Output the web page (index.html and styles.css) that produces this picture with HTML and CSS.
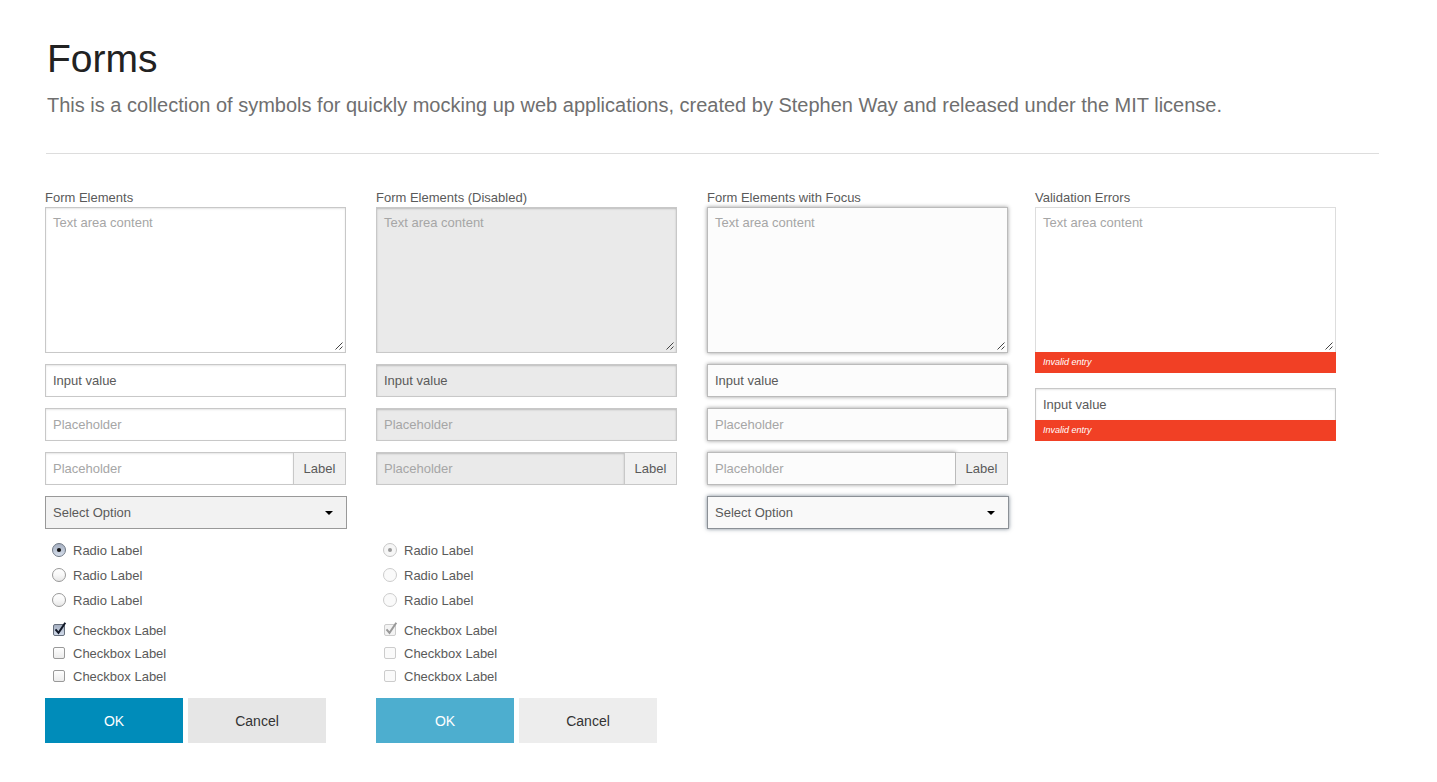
FILE: index.html
```html
<!DOCTYPE html>
<html lang="en">
<head>
<meta charset="utf-8">
<meta name="viewport" content="width=device-width, initial-scale=1">
<title>Forms</title>
<link rel="stylesheet" href="styles.css">
</head>
<body>
<header class="page-header">
  <h1 class="title">Forms</h1>
  <p class="intro">This is a collection of symbols for quickly mocking up web applications, created by Stephen Way and released under the MIT license.</p>
</header>
<main class="columns">
  <form class="column">
    <label class="heading" for="area-1">Form Elements</label>
    <div class="fields">
      <textarea class="field area" id="area-1" placeholder="Text area content"></textarea>
      <input class="field" type="text" value="Input value" aria-label="Value">
      <input class="field" type="text" placeholder="Placeholder" aria-label="Text">
      <div class="group">
        <input class="field" type="text" id="group-1" placeholder="Placeholder">
        <label class="addon" for="group-1">Label</label>
      </div>
      <select class="field select" aria-label="Option"><option>Select Option</option></select>
    </div>
    <div class="radios">
      <label class="choice"><input class="radio" type="radio" name="r1" checked>Radio Label</label>
      <label class="choice"><input class="radio" type="radio" name="r1">Radio Label</label>
      <label class="choice"><input class="radio" type="radio" name="r1">Radio Label</label>
    </div>
    <div class="checks">
      <label class="choice"><input class="check" type="checkbox" checked>Checkbox Label</label>
      <label class="choice"><input class="check" type="checkbox">Checkbox Label</label>
      <label class="choice"><input class="check" type="checkbox">Checkbox Label</label>
    </div>
    <div class="actions">
      <button class="button primary" type="button">OK</button>
      <button class="button" type="button">Cancel</button>
    </div>
  </form>

  <form class="column">
    <label class="heading" for="area-2">Form Elements (Disabled)</label>
    <div class="fields no-select">
      <textarea class="field area" id="area-2" placeholder="Text area content" disabled></textarea>
      <input class="field" type="text" value="Input value" aria-label="Value" disabled>
      <input class="field" type="text" placeholder="Placeholder" aria-label="Text" disabled>
      <div class="group">
        <input class="field" type="text" id="group-2" placeholder="Placeholder" disabled>
        <label class="addon" for="group-2">Label</label>
      </div>
    </div>
    <div class="radios">
      <label class="choice"><input class="radio" type="radio" name="r2" checked disabled>Radio Label</label>
      <label class="choice"><input class="radio" type="radio" name="r2" disabled>Radio Label</label>
      <label class="choice"><input class="radio" type="radio" name="r2" disabled>Radio Label</label>
    </div>
    <div class="checks">
      <label class="choice"><input class="check" type="checkbox" checked disabled>Checkbox Label</label>
      <label class="choice"><input class="check" type="checkbox" disabled>Checkbox Label</label>
      <label class="choice"><input class="check" type="checkbox" disabled>Checkbox Label</label>
    </div>
    <div class="actions">
      <button class="button primary" type="button" disabled>OK</button>
      <button class="button" type="button" disabled>Cancel</button>
    </div>
  </form>

  <form class="column focused">
    <label class="heading" for="area-3">Form Elements with Focus</label>
    <div class="fields">
      <textarea class="field area" id="area-3" placeholder="Text area content"></textarea>
      <input class="field" type="text" value="Input value" aria-label="Value">
      <input class="field" type="text" placeholder="Placeholder" aria-label="Text">
      <div class="group">
        <input class="field" type="text" id="group-3" placeholder="Placeholder">
        <label class="addon" for="group-3">Label</label>
      </div>
      <select class="field select" aria-label="Option"><option>Select Option</option></select>
    </div>
  </form>

  <form class="column invalid">
    <label class="heading" for="area-4">Validation Errors</label>
    <textarea class="field area" id="area-4" placeholder="Text area content" aria-describedby="error-1"></textarea>
    <p class="error" id="error-1">Invalid entry</p>
    <input class="field" type="text" value="Input value" aria-label="Value" aria-describedby="error-2">
    <p class="error" id="error-2">Invalid entry</p>
  </form>
</main>
</body>
</html>
```
FILE: styles.css
```css
* { box-sizing: border-box; }

body {
  margin: 0;
  background: #fff;
  color: #5a5a5a;
  font: 13px/18px "Liberation Sans", Arial, sans-serif;
}

button, input, textarea, select { font: inherit; color: inherit; }

.page-header {
  margin: 0 58px 0 46px;
  padding: 35px 0 35px 1px;
  border-bottom: 1px solid #ddd;
}

.title {
  margin: 0;
  color: #222;
  font-size: 39px;
  font-weight: 400;
  line-height: 48px;
}

.intro {
  margin: 9px 0 0;
  color: #6f6f6f;
  font-size: 20px;
  line-height: 26px;
}

.columns {
  display: grid;
  grid-template-columns: 331fr 331fr 328fr 301fr;
  align-items: start;
  padding: 35px 101px 39px 45px;
}

.column { padding-right: 30px; min-width: 0; }
.focused { padding-right: 27px; }
.invalid { padding-right: 0; }

.heading { display: block; }

.fields {
  display: flex;
  flex-direction: column;
  gap: 11px;
}
.no-select { padding-bottom: 44px; }

.field {
  display: block;
  width: 100%;
  height: 33px;
  margin: 0;
  padding: 0 7px;
  border: 1px solid #c8c8c8;
  border-radius: 0;
  outline: 0;
  background: #fff;
  box-shadow: inset 0 1px 2px rgba(0, 0, 0, .1);
}
.field::placeholder { color: #a6a6a6; opacity: 1; }

.area {
  height: 146px;
  padding: 6px 7px;
  resize: vertical;
}
.area::-webkit-resizer {
  background: url("data:image/svg+xml,%3Csvg xmlns='http://www.w3.org/2000/svg' width='15' height='15'%3E%3Cpath d='M5.5 12.5l7-7M9.5 12.5l3-3' stroke='%23444' fill='none'/%3E%3C/svg%3E") no-repeat right bottom;
}

.field:disabled {
  background: #eaeaea;
  color: #5a5a5a;
  box-shadow: inset 0 1px 2px rgba(0, 0, 0, .2);
}

.group { display: flex; }
.group .field { flex: 1; min-width: 0; }
.addon {
  flex: none;
  width: 52px;
  height: 33px;
  border: 1px solid #c8c8c8;
  border-left: 0;
  background: #f1f1f1;
  line-height: 31px;
  text-align: center;
}

.select {
  width: calc(100% + 1px);
  appearance: none;
  border-color: #999;
  background: #f2f2f2 url("data:image/svg+xml,%3Csvg xmlns='http://www.w3.org/2000/svg' width='8' height='4'%3E%3Cpath d='M0 0h8L4 4z'/%3E%3C/svg%3E") no-repeat right 13px center;
  box-shadow: none;
}

.focused .field {
  background-color: #fcfcfc;
  border-color: #bbb;
  box-shadow: 0 0 4px rgba(0, 0, 0, .4);
}
.focused .select {
  border-color: #8b9096;
  background-color: #f9f9f9;
  box-shadow: 0 0 4px rgba(40, 60, 80, .6);
}

.invalid .field { border-bottom: 0; height: 32px; }
.invalid .area { height: 145px; border-color: #ddd; box-shadow: none; }
.error {
  margin: 0 0 15px;
  padding: 0 8px;
  background: #f14025;
  color: #fff;
  font-size: 9px;
  font-style: italic;
  line-height: 21px;
}

.radios { margin-top: 9px; }
.checks { margin: 6px 0 10px; }
.choice {
  display: flex;
  align-items: center;
  gap: 6px;
  height: 25px;
  padding-left: 6px;
}
.checks .choice { height: 23px; }

.radio, .check {
  appearance: none;
  flex: none;
  width: 16px;
  height: 17px;
  margin: 0;
}
.radio { background: url("data:image/svg+xml,%3Csvg xmlns='http://www.w3.org/2000/svg' width='16' height='16'%3E%3Cdefs%3E%3ClinearGradient id='g' x2='0' y2='1'%3E%3Cstop stop-color='%23fff'/%3E%3Cstop offset='.5' stop-color='%23f8f8f8'/%3E%3Cstop offset='1' stop-color='%23e5e5e5'/%3E%3C/linearGradient%3E%3C/defs%3E%3Ccircle cx='8' cy='8' r='6.5' fill='url(%23g)' stroke='%23999'/%3E%3C/svg%3E") no-repeat; }
.radio:checked { background-image: url("data:image/svg+xml,%3Csvg xmlns='http://www.w3.org/2000/svg' width='16' height='16'%3E%3Cdefs%3E%3ClinearGradient id='g' x2='0' y2='1'%3E%3Cstop stop-color='%23a3adbf'/%3E%3Cstop offset='1' stop-color='%23d8e0ed'/%3E%3C/linearGradient%3E%3C/defs%3E%3Ccircle cx='8' cy='8' r='6.5' fill='url(%23g)' stroke='%23707985'/%3E%3Ccircle cx='8' cy='8' r='2.1' fill='%23111'/%3E%3C/svg%3E"); }
.radio:disabled { background-image: url("data:image/svg+xml,%3Csvg xmlns='http://www.w3.org/2000/svg' width='16' height='16'%3E%3Ccircle cx='8' cy='8' r='6.5' fill='%23fafafa' stroke='%23ccc'/%3E%3C/svg%3E"); }
.radio:checked:disabled { background-image: url("data:image/svg+xml,%3Csvg xmlns='http://www.w3.org/2000/svg' width='16' height='16'%3E%3Ccircle cx='8' cy='8' r='6.5' fill='%23f6f6f6' stroke='%23c8c8c8'/%3E%3Ccircle cx='8' cy='8' r='2' fill='%23999'/%3E%3C/svg%3E"); }

.check { background: url("data:image/svg+xml,%3Csvg xmlns='http://www.w3.org/2000/svg' width='16' height='16'%3E%3Cdefs%3E%3ClinearGradient id='g' x2='0' y2='1'%3E%3Cstop stop-color='%23fff'/%3E%3Cstop offset='1' stop-color='%23ebebeb'/%3E%3C/linearGradient%3E%3C/defs%3E%3Crect x='2.5' y='2.5' width='11' height='11' rx='1.5' fill='url(%23g)' stroke='%23999'/%3E%3C/svg%3E") no-repeat; }
.check:checked { background-image: url("data:image/svg+xml,%3Csvg xmlns='http://www.w3.org/2000/svg' width='16' height='16'%3E%3Cdefs%3E%3ClinearGradient id='g' x2='0' y2='1'%3E%3Cstop stop-color='%23a3adbf'/%3E%3Cstop offset='1' stop-color='%23d3dceb'/%3E%3C/linearGradient%3E%3C/defs%3E%3Crect x='2.5' y='2.5' width='11' height='11' rx='1.5' fill='url(%23g)' stroke='%23666f7c'/%3E%3Cpath d='M4.5 7.3l3 3.5L14.3.8' fill='none' stroke='%23111827' stroke-width='2'/%3E%3C/svg%3E"); }
.check:disabled { background-image: url("data:image/svg+xml,%3Csvg xmlns='http://www.w3.org/2000/svg' width='16' height='16'%3E%3Crect x='2.5' y='2.5' width='11' height='11' rx='1.5' fill='%23fafafa' stroke='%23ccc'/%3E%3C/svg%3E"); }
.check:checked:disabled { background-image: url("data:image/svg+xml,%3Csvg xmlns='http://www.w3.org/2000/svg' width='16' height='16'%3E%3Crect x='2.5' y='2.5' width='11' height='11' rx='1.5' fill='%23f3f3f3' stroke='%23ccc'/%3E%3Cpath d='M4.5 7.3l3 3.5L14.3.8' fill='none' stroke='%23999' stroke-width='2'/%3E%3C/svg%3E"); }

.actions { display: flex; gap: 5px; }
.button {
  flex: 0 1 138px;
  height: 45px;
  padding: 0;
  border: 0;
  background: #e6e6e6;
  color: #333;
  font-size: 14px;
}
.primary { background: #008cba; color: #fff; }
.button:disabled { background: #ededed; }
.primary:disabled { background: #4daecf; }
```
